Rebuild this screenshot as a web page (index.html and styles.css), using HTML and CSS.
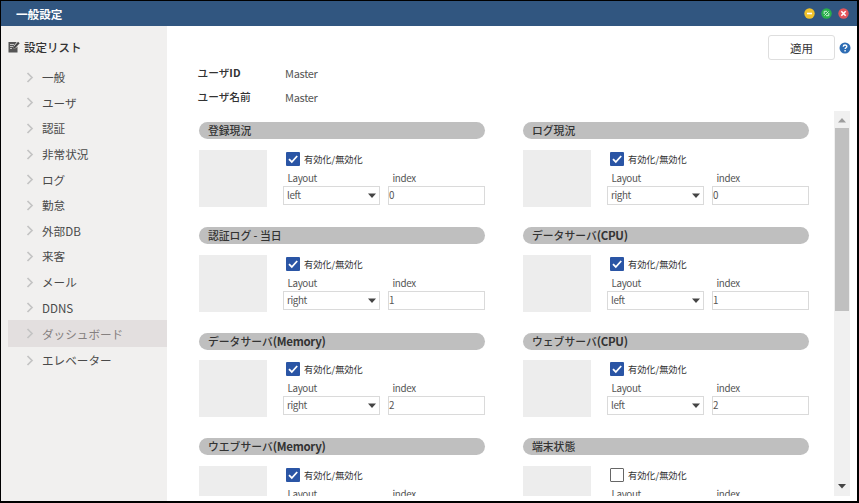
FILE: index.html
```
<!DOCTYPE html>
<html lang="ja">
<head>
<meta charset="utf-8">
<title>一般設定</title>
<link rel="stylesheet" href="styles.css">
</head>
<body>
<div class="window">
  <header class="titlebar">
    <h1>一般設定</h1>
    <div class="controls">
      <svg class="ctl" viewBox="0 0 11 11"><circle cx="5.5" cy="5.5" r="5.2" fill="#f0c22c"/><path d="M3 5.5h5" stroke="#fff" stroke-width="1.6"/></svg>
      <svg class="ctl" viewBox="0 0 11 11"><circle cx="5.5" cy="5.5" r="5.2" fill="#28b04b"/><path d="M3.2 6V3.3H6M7.8 5v2.7H5M3.4 7.6l4.2-4.2" fill="none" stroke="#c9f2d2" stroke-width="1"/></svg>
      <svg class="ctl" viewBox="0 0 11 11"><circle cx="5.5" cy="5.5" r="5.2" fill="#e2555c"/><path d="M3.3 3.3l4.4 4.4M7.7 3.3L3.3 7.7" stroke="#fff" stroke-width="1.6"/></svg>
    </div>
  </header>
  <div class="body">
    <nav class="sidebar">
      <div class="side-title">
        <svg viewBox="0 0 12 12"><path d="M.5 1h8.300L6 4.500 5 8l3-1 1.500-1.500V11.500h-9z" fill="#555"/><path d="M2 3.500h4M2 5.500h3M2 7.500h2" stroke="#ddd" stroke-width=".8"/><path d="M10 .8l1.700 1.500-4.700 5-2 .8.500-2.200z" fill="#444"/></svg>
        <span>設定リスト</span>
      </div>
      <ul id="menu"></ul>
    </nav>
    <main class="content">
      <div class="toolbar">
        <button class="apply">適用</button>
        <svg class="help" viewBox="0 0 12 12"><circle cx="6" cy="6" r="5.500" fill="#2e6db4"/><path d="M4.300 4.700c0-2.300 3.500-2.200 3.500-.2 0 1.200-1.700 1.200-1.700 2.500M6.100 8v1.400" fill="none" stroke="#fff" stroke-width="1.400"/></svg>
      </div>
      <dl class="user">
        <dt>ユーザ<b>ID</b></dt><dd>Master</dd>
        <dt>ユーザ名前</dt><dd>Master</dd>
      </dl>
      <div class="scroll">
        <div class="cards" id="cards"></div>
        <div class="bar">
          <svg class="arrow" viewBox="0 0 16 17"><path d="M4 11.500l4-4.500 4 4.500z" fill="#9d9d9d"/></svg>
          <div class="thumb"></div>
          <svg class="arrow end" viewBox="0 0 16 17"><path d="M4 5l4 4.500L12 5z" fill="#444"/></svg>
        </div>
      </div>
    </main>
  </div>
</div>
<script src="app.js"></script>
</body>
</html>
```
FILE: styles.css
```
* { box-sizing: border-box; margin: 0; padding: 0; }
body {
  width: 859px; height: 503px; overflow: hidden;
  font-family: "Noto Sans CJK JP", "Noto Sans", sans-serif;
  font-size: 11px; color: #444; background: #000;
}
.window { width: 859px; height: 503px; border: 1px solid #000; border-right-width: 2px; border-bottom-width: 2px; background: #fff; display: flex; flex-direction: column; }
.titlebar { height: 25px; flex: none; background: #315680; display: flex; align-items: center; justify-content: space-between; padding: 0 8px 0 15px; }
.titlebar h1 { font-size: 11.600px; line-height: 24px; font-weight: 700; color: #fff; }
.controls { display: flex; gap: 6px; }
.ctl { width: 11px; height: 11px; display: block; }
.body { flex: 1; min-height: 0; display: flex; }
.sidebar { width: 166px; flex: none; background: #f1f0ef; padding-left: 7px; }
.side-title { height: 38.500px; padding-top: 4px; display: flex; align-items: center; gap: 4px; font-size: 11.500px; font-weight: 500; color: #333; }
.side-title svg { width: 12px; height: 12px; }
.sidebar ul { list-style: none; }
.sidebar li { height: 25.600px; display: flex; align-items: center; font-size: 11.600px; color: #4a4a4a; padding-left: 18px; gap: 8px; }
.sidebar li svg { width: 8px; height: 11px; flex: none; }
.sidebar li.active { height: 27px; background: #e3dfdf; color: #858080; }
.content { flex: 1; min-width: 0; display: flex; flex-direction: column; }
.toolbar { display: flex; justify-content: flex-end; align-items: center; gap: 4px; height: 34px; padding: 9px 6px 0 0; }
.apply { width: 67px; height: 25px; border: 1px solid #dedede; border-radius: 3px; background: #fff; font: 400 11.500px/22px "Noto Sans CJK JP", sans-serif; color: #333; }
.help { width: 12px; height: 12px; }
.user { display: grid; grid-template-columns: 87.500px 1fr; grid-auto-rows: 24px; align-items: center; padding-left: 30.500px; height: 51px; line-height: 24px; padding-top: .5px; }
.user dt { font-weight: 500; color: #333; font-size: 10.700px; }
.user b { font-weight: 700; }
.user dd { font-size: 11px; letter-spacing: -.3px; color: #555; padding-top: 1px; }
.scroll { height: 385px; display: flex; justify-content: space-between; padding: 0 7px 0 32px; overflow: hidden; }
.cards { display: grid; grid-template-columns: 286px 286px; column-gap: 38px; grid-auto-rows: 105.400px; padding-top: 11px; }
.bar { width: 16px; background: #f0f0f0; display: flex; flex-direction: column; }
.bar .arrow { width: 16px; height: 17px; display: block; flex: none; }
.bar .end { margin-top: auto; }
.thumb { width: 14px; height: 183px; margin: 0 auto; background: #c0c0c0; }
.head { height: 17px; border-radius: 9px; background: #bfbfbf; padding-left: 9px; font-size: 10.800px; line-height: 16px; font-weight: 500; color: #333; white-space: nowrap; }
.head b { font-weight: 700; font-size: 11.500px; letter-spacing: -.3px; }
.card-body { display: flex; margin-top: 10.500px; }
.preview { width: 67.500px; height: 57px; background: #ededed; margin-right: 16.500px; }
.form { width: 202px; }
.toggle { display: flex; align-items: center; gap: 4px; height: 14px; margin: 2px 0 0 3px; font-size: 9.200px; line-height: 14px; color: #333; }
.box { width: 14px; height: 14px; border: 1.500px solid #666; border-radius: 1px; display: block; }
.box.on { border: 0; background: #2a55a5; }
.box svg { display: block; width: 14px; height: 14px; }
.fields { display: grid; grid-template-columns: 97px 97px; column-gap: 8px; font-size: 9.800px; letter-spacing: -.35px; color: #555; }
.fields label { height: 20px; line-height: 24px; padding-left: 4.500px; }
.input { height: 19px; border: 1px solid #dadada; line-height: 17px; display: flex; align-items: center; justify-content: space-between; }
.select { padding: 0 3px 0 3px; }
.select svg { width: 8px; height: 5px; }
```
FILE: app.js
```
const items = ['一般', 'ユーザ', '認証', '非常状況', 'ログ', '勤怠', '外部DB', '来客', 'メール', 'DDNS', 'ダッシュボード', 'エレベーター'];
document.getElementById('menu').innerHTML = items.map((t, i) =>
  `<li class="${i === 10 ? 'active' : ''}"><svg viewBox="0 0 8 11"><path d="M1.500 1l4.500 4.500L1.500 10" fill="none" stroke="#c4c4c4" stroke-width="1.700"/></svg><span>${t}</span></li>`).join('');

const cards = [
  ['登録現況', '', 'left', 0, true],
  ['ログ現況', '', 'right', 0, true],
  ['認証ログ - 当日', '', 'right', 1, true],
  ['データサーバ', '(CPU)', 'left', 1, true],
  ['データサーバ', '(Memory)', 'right', 2, true],
  ['ウェブサーバ', '(CPU)', 'left', 2, true],
  ['ウエブサーバ', '(Memory)', 'left', 3, true],
  ['端末状態', '', 'right', 3, false]
];
const check = '<svg viewBox="0 0 14 14"><path d="M3 7.200l2.800 2.800L11.200 4" fill="none" stroke="#fff" stroke-width="1.800"/></svg>';
document.getElementById('cards').innerHTML = cards.map(([name, suffix, layout, index, on]) => `
  <section>
    <h2 class="head">${name}<b>${suffix}</b></h2>
    <div class="card-body">
      <div class="preview"></div>
      <div class="form">
        <div class="toggle"><span class="box ${on ? 'on' : ''}">${on ? check : ''}</span><span>有効化/無効化</span></div>
        <div class="fields">
          <label>Layout</label><label>index</label>
          <div class="input select"><span>${layout}</span><svg viewBox="0 0 8 5"><path d="M0 .5h8L4 5z" fill="#444"/></svg></div>
          <div class="input"><span>${index}</span></div>
        </div>
      </div>
    </div>
  </section>`).join('');
```
